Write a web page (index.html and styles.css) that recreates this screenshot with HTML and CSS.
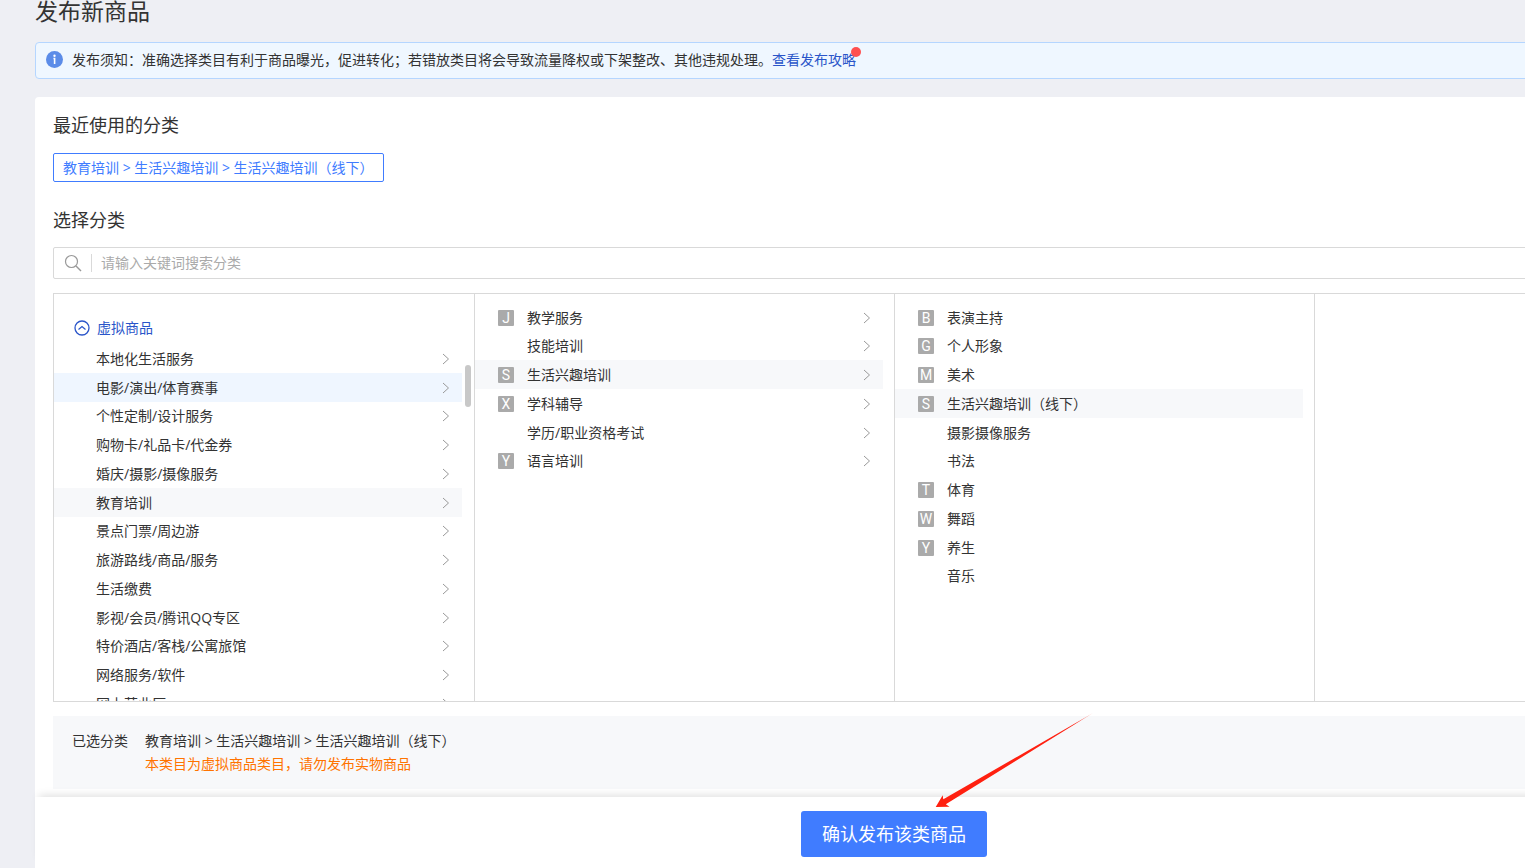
FILE: index.html
```html
<!DOCTYPE html>
<html lang="zh-CN">
<head>
<meta charset="utf-8">
<title>发布新商品</title>
<link rel="stylesheet" href="styles.css">
</head>
<body>
<svg class="symbols" aria-hidden="true">
  <symbol id="chevron" viewBox="0 0 8 12"><path d="M1 1l5.500 5L1 11" fill="none" stroke="currentColor"/></symbol>
</svg>
<div class="app">
  <main class="content">
    <h1 class="page-title">发布新商品</h1>
    <div class="notice">
      <svg class="notice-icon" viewBox="0 0 16 16" aria-hidden="true"><circle cx="8" cy="8" r="8" fill="#5b8ce8"/><circle cx="8" cy="4.500" r="1.100" fill="#fff"/><path d="M7 7h1.100v5.300" fill="none" stroke="#fff" stroke-width="1.500"/></svg>
      <p class="notice-text">发布须知：准确选择类目有利于商品曝光，促进转化；若错放类目将会导致流量降权或下架整改、其他违规处理。<a class="notice-link" href="#">查看发布攻略</a></p>
    </div>
    <section class="card">
      <h2 class="section-title">最近使用的分类</h2>
      <button class="recent" type="button">教育培训 &gt; 生活兴趣培训 &gt; 生活兴趣培训（线下）</button>
      <h2 class="section-title">选择分类</h2>
      <div class="search">
        <svg class="search-icon" viewBox="0 0 18 18" aria-hidden="true"><circle cx="7.500" cy="7.500" r="6" fill="none" stroke="#999" stroke-width="1.200"/><path d="M12 12l5 5" stroke="#999" stroke-width="1.400"/></svg>
        <input class="search-input" type="text" placeholder="请输入关键词搜索分类" aria-label="搜索分类">
      </div>
      <div class="picker">
        <div class="column column-root">
          <button class="group" type="button"><svg class="group-icon" viewBox="0 0 16 16" aria-hidden="true"><circle cx="8" cy="8" r="7" fill="none" stroke="currentColor" stroke-width="1.300"/><path d="M4.500 9.500L8 6.500l3.500 3" fill="none" stroke="currentColor" stroke-width="1.200"/></svg>虚拟商品</button>
          <ul class="list">
            <li><button class="row" type="button">本地化生活服务<svg class="chevron"><use href="#chevron"/></svg></button></li>
            <li><button class="row row-hover" type="button">电影/演出/体育赛事<svg class="chevron"><use href="#chevron"/></svg></button></li>
            <li><button class="row" type="button">个性定制/设计服务<svg class="chevron"><use href="#chevron"/></svg></button></li>
            <li><button class="row" type="button">购物卡/礼品卡/代金券<svg class="chevron"><use href="#chevron"/></svg></button></li>
            <li><button class="row" type="button">婚庆/摄影/摄像服务<svg class="chevron"><use href="#chevron"/></svg></button></li>
            <li><button class="row row-selected" type="button">教育培训<svg class="chevron"><use href="#chevron"/></svg></button></li>
            <li><button class="row" type="button">景点门票/周边游<svg class="chevron"><use href="#chevron"/></svg></button></li>
            <li><button class="row" type="button">旅游路线/商品/服务<svg class="chevron"><use href="#chevron"/></svg></button></li>
            <li><button class="row" type="button">生活缴费<svg class="chevron"><use href="#chevron"/></svg></button></li>
            <li><button class="row" type="button">影视/会员/腾讯QQ专区<svg class="chevron"><use href="#chevron"/></svg></button></li>
            <li><button class="row" type="button">特价酒店/客栈/公寓旅馆<svg class="chevron"><use href="#chevron"/></svg></button></li>
            <li><button class="row" type="button">网络服务/软件<svg class="chevron"><use href="#chevron"/></svg></button></li>
            <li><button class="row" type="button">网上营业厅<svg class="chevron"><use href="#chevron"/></svg></button></li>
          </ul>
          <span class="scroll-thumb"></span>
        </div>
        <div class="column">
          <ul class="list">
            <li><button class="row" type="button"><span class="letter">J</span>教学服务<svg class="chevron"><use href="#chevron"/></svg></button></li>
            <li><button class="row" type="button"><span class="letter letter-none"></span>技能培训<svg class="chevron"><use href="#chevron"/></svg></button></li>
            <li><button class="row row-selected" type="button"><span class="letter">S</span>生活兴趣培训<svg class="chevron"><use href="#chevron"/></svg></button></li>
            <li><button class="row" type="button"><span class="letter">X</span>学科辅导<svg class="chevron"><use href="#chevron"/></svg></button></li>
            <li><button class="row" type="button"><span class="letter letter-none"></span>学历/职业资格考试<svg class="chevron"><use href="#chevron"/></svg></button></li>
            <li><button class="row" type="button"><span class="letter">Y</span>语言培训<svg class="chevron"><use href="#chevron"/></svg></button></li>
          </ul>
        </div>
        <div class="column">
          <ul class="list">
            <li><button class="row" type="button"><span class="letter">B</span>表演主持</button></li>
            <li><button class="row" type="button"><span class="letter">G</span>个人形象</button></li>
            <li><button class="row" type="button"><span class="letter">M</span>美术</button></li>
            <li><button class="row row-selected" type="button"><span class="letter">S</span>生活兴趣培训（线下）</button></li>
            <li><button class="row" type="button"><span class="letter letter-none"></span>摄影摄像服务</button></li>
            <li><button class="row" type="button"><span class="letter letter-none"></span>书法</button></li>
            <li><button class="row" type="button"><span class="letter">T</span>体育</button></li>
            <li><button class="row" type="button"><span class="letter">W</span>舞蹈</button></li>
            <li><button class="row" type="button"><span class="letter">Y</span>养生</button></li>
            <li><button class="row" type="button"><span class="letter letter-none"></span>音乐</button></li>
          </ul>
        </div>
        <div class="column"></div>
      </div>
      <div class="summary">
        <span>已选分类</span>
        <div>
          <p class="summary-path">教育培训 &gt; 生活兴趣培训 &gt; 生活兴趣培训（线下）</p>
          <p class="summary-tip">本类目为虚拟商品类目，请勿发布实物商品</p>
        </div>
      </div>
    </section>
  </main>
  <footer class="footer"><button class="confirm" type="button">确认发布该类商品</button></footer>
  <svg class="pointer" viewBox="0 0 158 96" aria-hidden="true">
    <defs><linearGradient id="fade" x1="1" y1="0" x2="0" y2="1"><stop offset="0" stop-color="#ff2010" stop-opacity=".5"/><stop offset=".12" stop-color="#ff2010"/></linearGradient></defs>
    <path d="M158 0L10.800 91.300l3.700 2.400L.7 94l7-11.700.6 4z" fill="url(#fade)"/>
  </svg>
</div>
</body>
</html>
```
FILE: styles.css
```css
* { box-sizing: border-box; }

body {
  margin: 0;
  overflow: hidden;
  background: #eeeff4;
  color: #333;
  font: 14px/20px "Open Sans", "Noto Sans CJK SC", sans-serif;
}

h1, h2, p, ul { margin: 0; padding: 0; font-weight: 400; }
ul { list-style: none; }
button { padding: 0; border: 0; background: none; color: inherit; font: inherit; cursor: pointer; }

.symbols { display: none; }

.app {
  position: relative;
  display: flex;
  flex-direction: column;
  min-width: 1753px;
  height: 100vh;
  padding-left: 35px;
}

.content {
  flex: 1;
  min-height: 0;
  display: flex;
  flex-direction: column;
}

.page-title { margin-bottom: 20px; font-size: 23px; line-height: 22px; }

.notice {
  display: flex;
  align-items: center;
  gap: 9px;
  padding: 7px 10px 9px;
  margin-bottom: 18px;
  border: 1px solid #b5d6ff;
  border-radius: 4px;
  background: #eff7ff;
}
.notice-icon { width: 17px; height: 17px; }
.notice-text { line-height: 19px; }
.notice-link { position: relative; color: #2a55c9; text-decoration: none; }
.notice-link::after {
  content: "";
  position: absolute;
  top: -3px;
  right: -5px;
  width: 10px;
  height: 10px;
  border-radius: 50%;
  background: #ff5050;
}

.card {
  flex: 1;
  padding: 14px 18px 0;
  border-radius: 4px 4px 0 0;
  background: #fff;
}

.section-title { font-size: 18px; line-height: 28px; }

.recent {
  display: block;
  height: 29px;
  margin: 14px 0 24px;
  padding: 0 9px;
  border: 1px solid #407cff;
  border-radius: 2px;
  color: #407cff;
}

.search {
  display: flex;
  align-items: center;
  height: 32px;
  margin: 13px 0 14px;
  padding-left: 10px;
  border: 1px solid #d9d9d9;
  border-radius: 2px;
}
.search-icon { width: 18px; height: 18px; }
.search-input {
  flex: 1;
  height: 18px;
  margin-left: 9px;
  padding: 0 9px;
  border: 0;
  border-left: 1px solid #d9d9d9;
  outline: 0;
  background: none;
  color: #333;
  font: inherit;
}
.search-input::placeholder { color: #aaa; opacity: 1; }

.picker {
  display: grid;
  grid-template-columns: repeat(4, 1fr);
  height: 409px;
  border: 1px solid #d9d9d9;
}
.column { position: relative; padding-top: 9px; overflow: hidden; }
.column + .column { border-left: 1px solid #d9d9d9; }
.column-root { padding-top: 18px; }

.group {
  display: flex;
  align-items: center;
  gap: 7px;
  height: 32px;
  padding-left: 20px;
  color: #2a55c9;
}
.group-icon { width: 16px; height: 16px; }

.list { margin-right: 12px; }
.column + .column .list { margin-right: 11px; }
.row {
  display: flex;
  align-items: center;
  width: 100%;
  height: 29px;
  padding: 0 12px 0 23px;
  text-align: left;
}
.column-root .row { padding-left: 42px; }
.column-root li:nth-child(4n + 3) .row,
.column + .column li:nth-child(4n + 2) .row { height: 28px; }
.row-hover { background: #eff6ff; }
.row-selected { background: #f7f8fa; }

.letter {
  width: 16px;
  height: 16px;
  margin-right: 13px;
  border-radius: 1px;
  background: #aaa;
  color: #fff;
  font-family: Roboto, sans-serif;
  line-height: 17px;
  text-align: center;
}
.letter-none { background: none; }

.chevron { width: 8px; height: 12px; margin-left: auto; color: #999; }

.scroll-thumb {
  position: absolute;
  top: 71px;
  right: 3px;
  width: 6px;
  height: 42px;
  border-radius: 3px;
  background: #c8c8c8;
}

.summary {
  display: flex;
  gap: 17px;
  margin-top: 14px;
  padding: 13px 19px 14px;
  background: #f7f8fa;
  line-height: 23px;
}
.summary-tip { color: #ff7300; }

.footer {
  display: flex;
  justify-content: center;
  padding: 14px 0 11px;
  background: #fff;
  box-shadow: 0 -6px 8px -4px rgba(0, 0, 0, .12);
}
.confirm {
  height: 46px;
  padding: 0 21px;
  border-radius: 3px;
  background: #407cff;
  color: #fff;
  font-size: 18px;
}

.pointer {
  position: absolute;
  left: 935px;
  bottom: 59px;
  width: 158px;
  height: 96px;
}
```
